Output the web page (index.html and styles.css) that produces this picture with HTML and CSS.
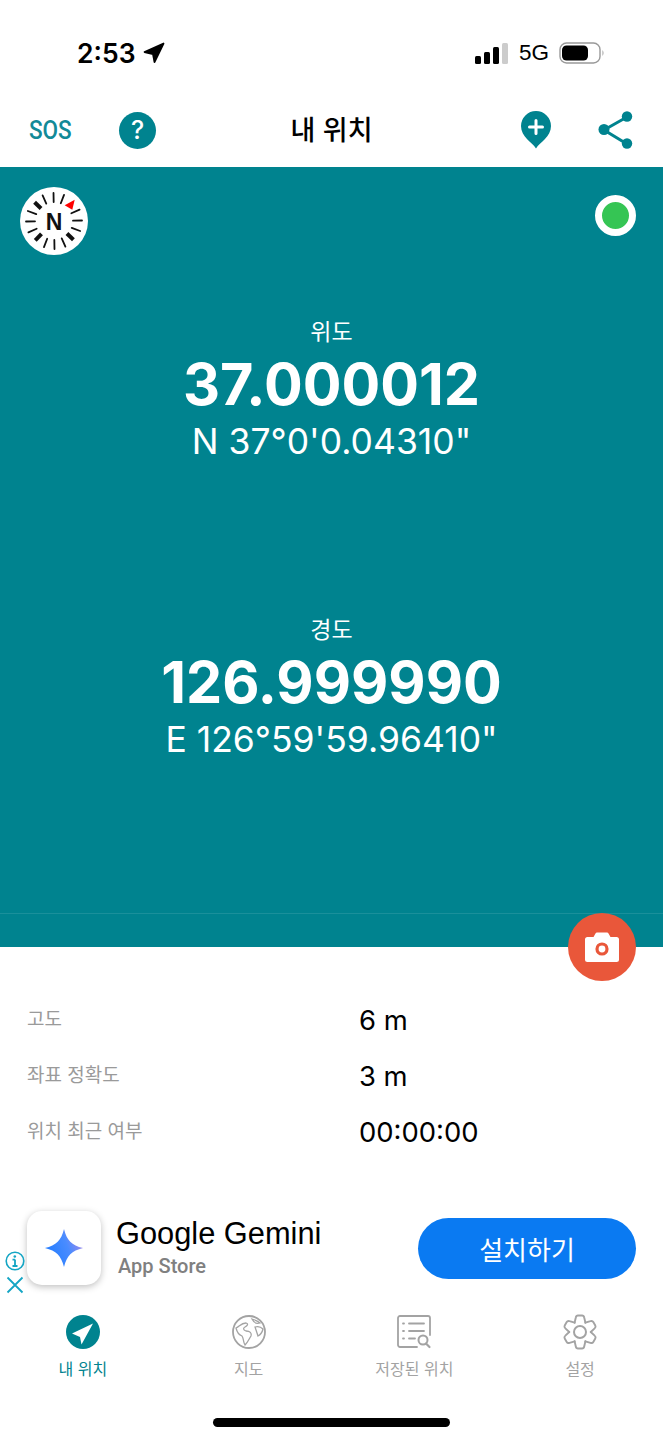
FILE: index.html
```html
<!DOCTYPE html>
<html lang="ko">
<head>
<meta charset="utf-8">
<title>내 위치</title>
<link rel="stylesheet" href="styles.css">
</head>
<body>
<div class="screen">
  <div class="status">
    <div class="status-left">
      <span class="time">2:53</span>
      <svg class="loc-arrow" width="22" height="22" viewBox="0 0 22 22"><path d="M20.500 1.500 L1.500 10 L10 12 L11.500 20 Z" fill="#000" stroke="#000" stroke-width="1.800" stroke-linejoin="round"/></svg>
    </div>
    <div class="status-right">
      <span class="bars"><i class="bar b1"></i><i class="bar b2"></i><i class="bar b3"></i><i class="bar b4"></i></span>
      <span class="net">5G</span>
      <svg width="46" height="22" viewBox="0 0 46 22"><rect x="1" y="1" width="40" height="20" rx="6.500" fill="none" stroke="#999" stroke-width="1.400"/><rect x="3" y="3.500" width="26" height="15" rx="4.500" fill="#000"/><path d="M43.500 8 Q45.500 11 43.500 14 Z" fill="#999"/></svg>
    </div>
  </div>
  <header class="header">
    <div class="header-left">
      <span class="sos">SOS</span>
      <span class="help">?</span>
    </div>
    <h1 class="title">내 위치</h1>
    <div class="header-right">
      <svg width="30" height="38" viewBox="0 0 30 38"><path d="M15 37.500 C11 31 0 26 0 15 A15 15 0 0 1 30 15 C30 26 19 31 15 37.500 Z" fill="#00838f"/><path d="M15 9.500 V22.500 M8.500 16 H21.500" stroke="#fff" stroke-width="3" stroke-linecap="round"/></svg>
      <svg width="36" height="38" viewBox="0 0 36 38"><path d="M29 6 L6 19 L29 33" fill="none" stroke="#00838f" stroke-width="3"/><circle cx="29" cy="5.500" r="5.200" fill="#00838f"/><circle cx="6" cy="18.500" r="5.500" fill="#00838f"/><circle cx="29" cy="32.500" r="5.200" fill="#00838f"/></svg>
    </div>
  </header>
  <main class="panel">
    <svg class="compass" width="68" height="68" viewBox="0 0 68 68">
      <circle cx="34" cy="34" r="34" fill="#fff"/>
      <g stroke="#111" stroke-width="1.800" stroke-linecap="round">
        <line x1="34" y1="6" x2="34" y2="15" transform="rotate(-1 34 34)"/>
        <line x1="34" y1="6" x2="34" y2="15" transform="rotate(21 34 34)"/>
        <line x1="34" y1="6" x2="34" y2="15" transform="rotate(66 34 34)"/>
        <line x1="34" y1="6" x2="34" y2="15" transform="rotate(89 34 34)"/>
        <line x1="34" y1="6" x2="34" y2="15" transform="rotate(111 34 34)"/>
        <line x1="34" y1="6" x2="34" y2="15" transform="rotate(156 34 34)"/>
        <line x1="34" y1="6" x2="34" y2="15" transform="rotate(179 34 34)"/>
        <line x1="34" y1="6" x2="34" y2="15" transform="rotate(201 34 34)"/>
        <line x1="34" y1="6" x2="34" y2="15" transform="rotate(246 34 34)"/>
        <line x1="34" y1="6" x2="34" y2="15" transform="rotate(269 34 34)"/>
        <line x1="34" y1="6" x2="34" y2="15" transform="rotate(291 34 34)"/>
        <line x1="34" y1="6" x2="34" y2="15" transform="rotate(336 34 34)"/>
      </g>
      <g stroke="#111" stroke-width="4">
        <line x1="34" y1="7" x2="34" y2="16" transform="rotate(134 34 34)"/>
        <line x1="34" y1="7" x2="34" y2="16" transform="rotate(224 34 34)"/>
        <line x1="34" y1="7" x2="34" y2="16" transform="rotate(314 34 34)"/>
      </g>
      <polygon points="54.700,12.700 44.700,18.300 52.300,22.700" fill="#f00"/>
      <text class="compass-n" x="34" y="43" text-anchor="middle">N</text>
    </svg>
    <span class="gps-dot"></span>
    <section class="coord coord-lat">
      <div class="coord-label">위도</div>
      <div class="coord-value">37.000012</div>
      <div class="coord-dms">N 37°0'0.04310"</div>
    </section>
    <section class="coord coord-lon">
      <div class="coord-label">경도</div>
      <div class="coord-value">126.999990</div>
      <div class="coord-dms">E 126°59'59.96410"</div>
    </section>
    <div class="panel-line"></div>
    <button class="camera" aria-label="카메라">
      <svg width="34" height="30" viewBox="0 0 34 30"><path d="M2.500 5 H8.500 L10.500 1.500 Q11 .5 12 .5 H22 Q23 .5 23.500 1.500 L25.500 5 H31.500 A2.500 2.500 0 0 1 34 7.500 V27.500 A2.500 2.500 0 0 1 31.500 30 H2.500 A2.500 2.500 0 0 1 0 27.500 V7.500 A2.500 2.500 0 0 1 2.500 5 Z" fill="#fff"/><circle cx="17" cy="17" r="5" fill="none" stroke="#e9573a" stroke-width="3.200"/></svg>
    </button>
  </main>
  <section class="info">
    <div class="info-row"><span class="info-key">고도</span><span class="info-val">6 m</span></div>
    <div class="info-row"><span class="info-key">좌표 정확도</span><span class="info-val">3 m</span></div>
    <div class="info-row"><span class="info-key">위치 최근 여부</span><span class="info-val">00:00:00</span></div>
  </section>
  <aside class="ad">
    <div class="ad-marks">
      <svg width="20" height="20" viewBox="0 0 20 20"><circle cx="10" cy="10" r="8.800" fill="none" stroke="#14a5c4" stroke-width="1.600"/><path d="M10 8.500 V15 M7.500 15 H12.500 M7.500 8.700 H10" fill="none" stroke="#14a5c4" stroke-width="1.800"/><circle cx="9.800" cy="5.500" r="1.300" fill="#14a5c4"/></svg>
      <svg width="18" height="18" viewBox="0 0 18 18"><path d="M1.500 1.500 L16.500 16.500 M16.500 1.500 L1.500 16.500" stroke="#14a5c4" stroke-width="1.800"/></svg>
    </div>
    <div class="ad-icon">
      <svg width="40" height="40" viewBox="0 0 42 42"><defs><linearGradient id="gem" x1="0" y1="0.700" x2="1" y2="0.300"><stop offset="0" stop-color="#1f7bff"/><stop offset="0.600" stop-color="#4a8cff"/><stop offset="1" stop-color="#a88ae8"/></linearGradient></defs><path d="M21 1 C24 13 29 18 41 21 C29 24 24 29 21 41 C18 29 13 24 1 21 C13 18 18 13 21 1 Z" fill="url(#gem)"/></svg>
    </div>
    <div class="ad-text">
      <div class="ad-name">Google Gemini</div>
      <div class="ad-store">App Store</div>
    </div>
    <button class="ad-btn">설치하기</button>
  </aside>
  <nav class="tabs">
    <div class="tab tab-active">
      <svg width="36" height="36" viewBox="0 0 36 36"><circle cx="18" cy="18" r="17" fill="#00838f"/><path d="M28 9.500 L7 19.500 L15 23 L16.500 30.500 Z" fill="#fff"/></svg>
      <span>내 위치</span>
    </div>
    <div class="tab">
      <svg width="36" height="36" viewBox="0 0 36 36" fill="none" stroke="#a3a3a3" stroke-width="1.300"><circle cx="18" cy="18" r="16" stroke-width="1.800"/><path d="M5 14 C9 12 10 9 15 9 C18 10 16 12 14 13 C12 14 12 16 15 17 C19 17 21 19 20 22 C18 25 17 28 14 31 C12 28 13 25 11 22 C8 21 6 18 5 14 Z"/><path d="M21 5 C24 6 27 7 29 9 C26 10 23 9 21 5 Z"/><path d="M24 13 C27 12 30 13 32 15 C31 19 29 21 27 22 C26 19 25 16 24 13 Z"/></svg>
      <span>지도</span>
    </div>
    <div class="tab">
      <svg width="36" height="36" viewBox="0 0 36 36" fill="none" stroke="#a3a3a3" stroke-width="1.800" stroke-linecap="round"><path d="M21 33 H4 A2 2 0 0 1 2 31 V4 A2 2 0 0 1 4 2 H32 A2 2 0 0 1 34 4 V21"/><path d="M7 9.500 H8 M7 17 H8 M7 24.500 H8"/><path d="M13 9.500 H28 M13 17 H28 M13 24.500 H19"/><circle cx="27" cy="26" r="4.500" stroke-width="2"/><path d="M30 29.500 L33.500 33" stroke-width="2.200"/></svg>
      <span>저장된 위치</span>
    </div>
    <div class="tab">
      <svg width="36" height="36" viewBox="0 0 36 36" fill="none" stroke="#a3a3a3" stroke-width="1.900" stroke-linejoin="round" stroke-linecap="round">
        <path d="M12.600 8.700 L13.800 3.500 Q14.200 1.500 16 1.500 H20 Q21.800 1.500 22.200 3.500 L23.400 8.700"/>
        <path d="M12.600 8.700 L13.800 3.500 Q14.200 1.500 16 1.500 H20 Q21.800 1.500 22.200 3.500 L23.400 8.700" transform="rotate(60 18 18)"/>
        <path d="M12.600 8.700 L13.800 3.500 Q14.200 1.500 16 1.500 H20 Q21.800 1.500 22.200 3.500 L23.400 8.700" transform="rotate(120 18 18)"/>
        <path d="M12.600 8.700 L13.800 3.500 Q14.200 1.500 16 1.500 H20 Q21.800 1.500 22.200 3.500 L23.400 8.700" transform="rotate(180 18 18)"/>
        <path d="M12.600 8.700 L13.800 3.500 Q14.200 1.500 16 1.500 H20 Q21.800 1.500 22.200 3.500 L23.400 8.700" transform="rotate(240 18 18)"/>
        <path d="M12.600 8.700 L13.800 3.500 Q14.200 1.500 16 1.500 H20 Q21.800 1.500 22.200 3.500 L23.400 8.700" transform="rotate(300 18 18)"/>
        <circle cx="18" cy="18" r="6" stroke-width="2"/>
      </svg>
      <span>설정</span>
    </div>
  </nav>
  <div class="home-wrap"><div class="home"></div></div>
</div>
</body>
</html>
```
FILE: styles.css
```css
* { box-sizing: border-box; }
html, body { margin: 0; padding: 0; background: #fff; }
body { font-family: "Inter", "Noto Sans CJK KR", sans-serif; color: #000; }
.screen { width: 663px; height: 1440px; overflow: hidden; display: flex; flex-direction: column; }

.status { height: 100px; padding: 34px 58px 0 77px; display: flex; justify-content: space-between; align-items: flex-start; }
.status-left { display: flex; align-items: center; gap: 7px; height: 38px; }
.time { font-size: 26.500px; font-weight: 600; line-height: 38px; }
.loc-arrow { margin-top: -1px; }
.status-right { display: flex; align-items: center; height: 38px; }
.bars { display: flex; align-items: flex-end; gap: 3px; height: 21px; margin-right: 11px; }
.bar { display: block; width: 6px; background: #000; border-radius: 1.500px; }
.b1 { height: 8px; } .b2 { height: 12px; } .b3 { height: 17px; } .b4 { height: 21px; background: #ccc; }
.net { font-size: 22.500px; font-family: "Liberation Sans", sans-serif; margin-right: 10px; }

.header { height: 67px; display: flex; align-items: center; justify-content: space-between; padding: 0 29px 7px; position: relative; }
.header-left, .header-right { display: flex; align-items: center; }
.header-left { gap: 47px; }
.header-right { gap: 47px; }
.sos { display: inline-block; font-family: "Roboto", sans-serif; font-size: 25px; font-weight: 500; color: #128a98; width: 43px; line-height: 37px; white-space: nowrap; transform: scaleX(.9); transform-origin: left center; }
.help { width: 37px; height: 37px; border-radius: 50%; background: #00838f; color: #fff; font-size: 25px; font-weight: 500; text-align: center; line-height: 37px; }
.title { position: absolute; left: 0; right: 0; top: 10px; margin: 0; text-align: center; font-size: 27px; font-weight: 500; line-height: 38px; font-family: "Noto Sans CJK KR", sans-serif; pointer-events: none; }

.panel { height: 780px; background: #00838f; position: relative; color: #fff; display: flex; flex-direction: column; align-items: center; padding-top: 148px; flex: none; }
.compass { position: absolute; left: 20px; top: 20px; }
.compass-n { font: 700 23px "Liberation Sans", sans-serif; fill: #111; }
.gps-dot { position: absolute; left: 595px; top: 28px; width: 41px; height: 41px; border-radius: 50%; background: #35c554; border: 7px solid #fff; }
.coord { text-align: center; display: flex; flex-direction: column; align-items: center; }
.coord-lon { margin-top: 148px; }
.coord-label { font-family: "Noto Sans CJK KR", sans-serif; font-size: 23px; line-height: 30px; margin-bottom: 3px; }
.coord-value { font-size: 57.500px; font-weight: 700; line-height: 72px; }
.coord-dms { font-size: 35.500px; font-weight: 400; line-height: 46px; margin-top: -1px; }
.panel-line { position: absolute; left: 0; right: 0; top: 746px; height: 1px; background: #1a909b; }
.camera { position: absolute; left: 568px; top: 746px; width: 68px; height: 68px; border: 0; border-radius: 50%; background: #e9573a; padding: 0; display: flex; align-items: center; justify-content: center; }

.info { padding: 45px 27px 0; height: 264px; flex: none; }
.info-row { height: 56px; display: flex; align-items: center; }
.info-key { width: 332px; font-family: "Noto Sans CJK KR", sans-serif; font-size: 19px; color: #9a9a9a; margin-top: -5px; }
.info-val { font-family: "Inter", sans-serif; font-size: 27.400px; color: #000; }

.ad { height: 90px; flex: none; position: relative; display: flex; align-items: center; padding: 0 27px; margin-top: -8px; }
.ad-marks { position: absolute; left: 5px; top: 48px; display: flex; flex-direction: column; align-items: center; gap: 5px; }
.ad-icon { width: 74px; height: 74px; border-radius: 15px; background: #fff; box-shadow: 0 2px 7px rgba(0,0,0,.25); display: flex; align-items: center; justify-content: center; flex: none; }
.ad-text { margin: -3px 0 0 15px; flex: 1; }
.ad-name { font-family: "Liberation Sans", sans-serif; font-size: 30.800px; line-height: 38px; }
.ad-store { font-family: "Roboto", sans-serif; font-size: 20px; font-weight: 500; color: #808080; line-height: 26px; margin-left: 2px; }
.ad-btn { width: 218px; height: 61px; border: 0; border-radius: 31px; background: #0a7af2; color: #fff; font-family: "Noto Sans CJK KR", sans-serif; font-size: 26px; font-weight: 400; flex: none; }

.tabs { display: grid; grid-template-columns: repeat(4, 1fr); padding: 21px 0 0; flex: none; }
.tab { display: flex; flex-direction: column; align-items: center; font-family: "Noto Sans CJK KR", sans-serif; font-size: 16px; color: #a3a3a3; gap: 6px; line-height: 24px; }
.tab-active { color: #00838f; font-weight: 400; }
.home-wrap { display: flex; justify-content: center; margin-top: 38px; }
.home { width: 237px; height: 9px; border-radius: 5px; background: #000; }
```
